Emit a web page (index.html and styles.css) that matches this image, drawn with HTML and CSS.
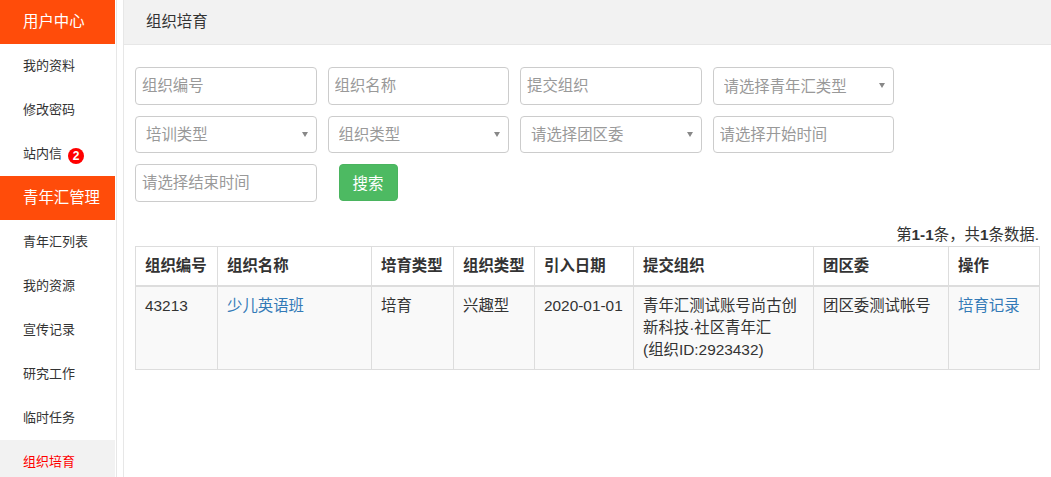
FILE: index.html
```html
<!DOCTYPE html>
<html lang="zh-CN">
<head>
<meta charset="utf-8">
<title>组织培育</title>
<link rel="stylesheet" href="styles.css">
</head>
<body>
<div class="layout">
  <aside class="sidebar">
    <nav class="menu">
      <div class="side-title">用户中心</div>
      <a class="side-item">我的资料</a>
      <a class="side-item">修改密码</a>
      <a class="side-item">站内信<span class="badge">2</span></a>
      <div class="side-title">青年汇管理</div>
      <a class="side-item">青年汇列表</a>
      <a class="side-item">我的资源</a>
      <a class="side-item">宣传记录</a>
      <a class="side-item">研究工作</a>
      <a class="side-item">临时任务</a>
      <a class="side-item active">组织培育</a>
    </nav>
  </aside>
  <main class="main">
    <header class="topbar">组织培育</header>
    <section class="content">
      <form class="filters">
        <input class="field" placeholder="组织编号">
        <input class="field" placeholder="组织名称">
        <input class="field" placeholder="提交组织">
        <div class="pick"><select class="field select"><option>请选择青年汇类型</option></select></div>
        <div class="pick"><select class="field select"><option>培训类型</option></select></div>
        <div class="pick"><select class="field select"><option>组织类型</option></select></div>
        <div class="pick"><select class="field select"><option>请选择团区委</option></select></div>
        <input class="field" placeholder="请选择开始时间">
        <input class="field" placeholder="请选择结束时间">
        <div class="actions"><button type="button" class="search">搜索</button></div>
      </form>
      <div class="summary">第<b>1-1</b>条，共<b>1</b>条数据.</div>
      <table class="grid">
        <colgroup>
          <col class="c1"><col class="c2"><col class="c3"><col class="c4"><col class="c5"><col class="c6"><col class="c7"><col class="c8">
        </colgroup>
        <thead>
          <tr><th>组织编号</th><th>组织名称</th><th>培育类型</th><th>组织类型</th><th>引入日期</th><th>提交组织</th><th>团区委</th><th>操作</th></tr>
        </thead>
        <tbody>
          <tr>
            <td>43213</td>
            <td><a class="link">少儿英语班</a></td>
            <td>培育</td>
            <td>兴趣型</td>
            <td>2020-01-01</td>
            <td>青年汇测试账号尚古创新科技·社区青年汇<br>(组织ID:2923432)</td>
            <td>团区委测试帐号</td>
            <td><a class="link">培育记录</a></td>
          </tr>
        </tbody>
      </table>
    </section>
  </main>
</div>
</body>
</html>
```
FILE: styles.css
```css
* { box-sizing: border-box; }
html, body { margin: 0; height: 100%; overflow: hidden; background: #fff; }
body {
  font-family: "Liberation Sans", "Noto Sans CJK SC", sans-serif;
  font-size: 15.4px;
  color: #333;
}
.layout { display: flex; height: 477px; }
.sidebar {
  width: 124px;
  flex: none;
  border-right: 1px solid #e7e7e7;
}
.menu {
  width: 117px;
  height: 100%;
  padding-right: 1px;
  border-right: 1px solid #e7e7e7;
}
.side-title, .side-item {
  display: block;
  height: 44px;
  padding-left: 23px;
  line-height: 43px;
}
.side-title { background: #ff4c0a; color: #fff; font-size: 15.4px; }
.side-item { font-size: 13px; color: #333; }
.side-item.active { background: #f2f2f2; color: #f00; }
.badge {
  display: inline-block;
  width: 16px;
  height: 16px;
  margin-left: 6px;
  border-radius: 50%;
  background: #f00;
  color: #fff;
  font-size: 12px;
  font-weight: bold;
  line-height: 16px;
  text-align: center;
  vertical-align: -2px;
}
.main { flex: 1; min-width: 0; }
.topbar {
  height: 45px;
  line-height: 43px;
  padding-left: 22px;
  background: #f2f2f2;
  border-bottom: 1px solid #e7e7e7;
  color: #333;
}
.content { padding: 22px 12px 0 11px; }
.filters {
  display: grid;
  grid-template-columns: repeat(4, 181.5px);
  grid-auto-rows: 37.5px;
  gap: 11px;
}
.field {
  display: block;
  width: 100%;
  height: 100%;
  padding: 1px 6px 0;
  border: 1px solid #ccc;
  border-radius: 4px;
  background: #fff;
  color: #999;
  font: inherit;
  outline: none;
}
.field::placeholder { color: #999; opacity: 1; }
.pick { position: relative; }
.select { appearance: none; -webkit-appearance: none; padding-left: 10px; }
.pick::after {
  content: "";
  position: absolute;
  right: 9px;
  top: 16px;
  border-style: solid;
  border-width: 5px 3px 0;
  border-color: #888 transparent transparent;
}
.actions { padding-left: 11px; }
.search {
  width: 59px;
  height: 37px;
  padding: 0 0 2px;
  border: 1px solid #4ab45f;
  border-radius: 4px;
  background: #4dba62;
  color: #fff;
  font: inherit;
}
.summary { margin-top: 22px; height: 22px; line-height: 22px; text-align: right; }
.grid {
  width: 904px;
  table-layout: fixed;
  border-collapse: collapse;
  border: 1px solid #ddd;
  line-height: 22px;
}
.c1 { width: 82px; } .c2 { width: 154px; } .c3 { width: 82px; } .c4 { width: 81px; }
.c5 { width: 99px; } .c6 { width: 180px; } .c7 { width: 135px; } .c8 { width: 91px; }
.grid th, .grid td { padding: 8px 9px; border: 1px solid #ddd; vertical-align: top; text-align: left; }
.grid th { border-bottom-width: 2px; font-weight: bold; }
.grid tbody tr { background: #f9f9f9; }
.link { color: #337ab7; }
```
